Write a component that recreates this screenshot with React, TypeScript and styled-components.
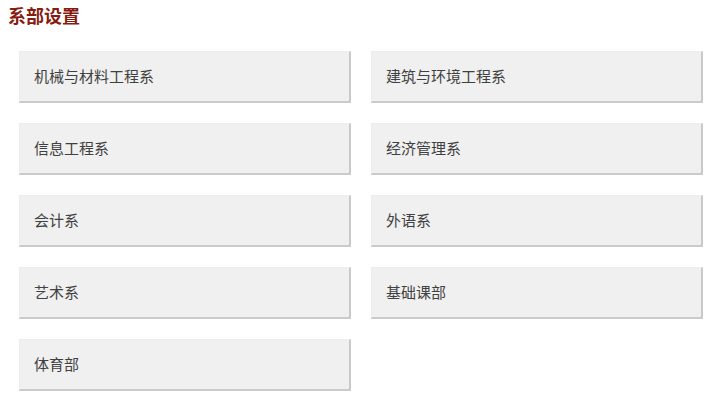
import React from "react";
import styled, { createGlobalStyle } from "styled-components";

const Global = createGlobalStyle`
  html, body { margin: 0; padding: 0; background: #fff; }
  body { font-family: "Noto Sans CJK SC", "Microsoft YaHei", sans-serif; }
`;

const Page = styled.div`
  padding: 4px 8px 0 8px;
`;

const Title = styled.h2`
  margin: 0;
  font-size: 18px;
  line-height: 22px;
  font-weight: 700;
  color: #861b10;
`;

const Grid = styled.div`
  display: grid;
  grid-template-columns: 332px 332px;
  column-gap: 20px;
  row-gap: 20px;
  margin: 25px 0 0 11px;
`;

const Card = styled.a`
  display: flex;
  align-items: center;
  box-sizing: border-box;
  height: 52px;
  padding: 0 0 2px 14px;
  background: #f0f0f0;
  border-top: 1px solid #ececec;
  border-left: 1px solid #ececec;
  border-right: 2px solid #c9c9c9;
  border-bottom: 2px solid #cbcbcb;
  color: #404040;
  font-size: 15px;
  text-decoration: none;
  cursor: pointer;
`;

const items = [
  "机械与材料工程系",
  "建筑与环境工程系",
  "信息工程系",
  "经济管理系",
  "会计系",
  "外语系",
  "艺术系",
  "基础课部",
  "体育部",
];

export default function App() {
  return (
    <Page>
      <Global />
      <Title>系部设置</Title>
      <Grid>
        {items.map((t) => (
          <Card key={t}>{t}</Card>
        ))}
      </Grid>
    </Page>
  );
}
